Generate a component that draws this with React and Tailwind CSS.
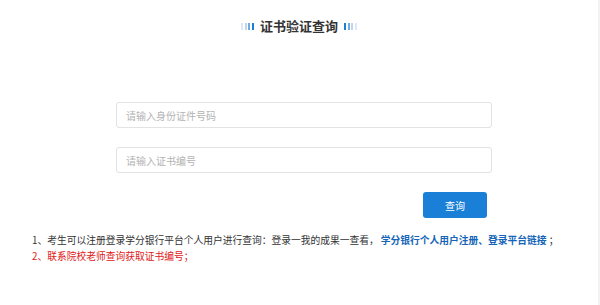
import React from "react";

function Bars({ reverse }) {
  const colors = ["bg-[#dde9f6]", "bg-[#bcd6ef]", "bg-[#6ea9e0]", "bg-[#1a7fd6]"];
  const list = reverse ? [...colors].reverse() : colors;
  return (
    <div className="flex items-center gap-[1.5px]">
      {list.map((c, i) => (
        <span key={i} className={`block w-[2px] h-[7px] ${c}`} />
      ))}
    </div>
  );
}

export default function App() {
  return (
    <div
      className="w-[600px] h-[305px] bg-white border-r-2 border-[#f2f2f2] text-[#333]"
      style={{ fontFamily: '"Noto Sans CJK SC", "Noto Sans", sans-serif' }}
    >
      <div className="pt-[17px] flex items-center justify-center gap-[6px]">
        <Bars />
        <h1 className="text-[13px] leading-[18px] font-bold text-[#333]">证书验证查询</h1>
        <Bars reverse />
      </div>

      <div className="ml-[116px] w-[376px] mt-[67px] flex flex-col gap-[19px]">
        <input
          className="h-[26px] w-full border border-[#e3e3e3] rounded-[3px] pl-[9px] text-[10px] outline-none placeholder:text-[#b3b3b3]"
          placeholder="请输入身份证件号码"
        />
        <input
          className="h-[26px] w-full border border-[#e3e3e3] rounded-[3px] pl-[9px] text-[10px] outline-none placeholder:text-[#b3b3b3]"
          placeholder="请输入证书编号"
        />
      </div>

      <button className="ml-[423px] mt-[19px] block w-[64px] h-[26px] rounded-[3px] bg-[#1a7fd6] text-white text-[10px]">
        查询
      </button>

      <div className="ml-[32px] mt-[14px] text-[9.75px] leading-[16px]">
        <p>
          1、考生可以注册登录学分银行平台个人用户进行查询：登录一我的成果一查看，{" "}
          <span className="text-[#1565b8] font-bold">学分银行个人用户注册、登录平台链接</span> ；
        </p>
        <p className="text-[#e02020]">2、联系院校老师查询获取证书编号；</p>
      </div>
    </div>
  );
}
